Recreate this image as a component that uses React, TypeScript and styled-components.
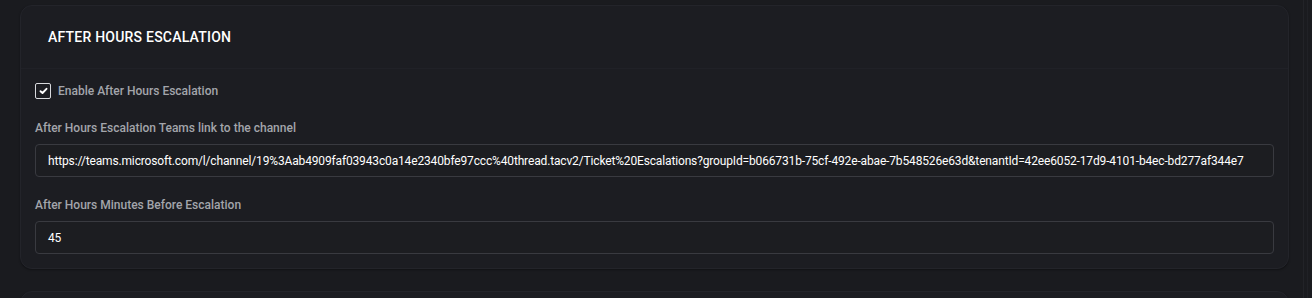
import styled, { createGlobalStyle } from 'styled-components';

const TEAMS_LINK =
  'https://teams.microsoft.com/l/channel/19%3Aab4909faf03943c0a14e2340bfe97ccc%40thread.tacv2/Ticket%20Escalations?groupId=b066731b-75cf-492e-abae-7b548526e63d&tenantId=42ee6052-17d9-4101-b4ec-bd277af344e7';

const GlobalStyle = createGlobalStyle`
  html, body {
    margin: 0;
    padding: 0;
    background-color: #1a1b1f;
    font-family: Roboto, "Liberation Sans", Arial, sans-serif;
  }
`;

const Page = styled.div`
  display: flex;
  height: 298px;
  overflow: hidden;
`;

const Content = styled.div`
  flex: 1;
  min-width: 0;
  display: flex;
  flex-direction: column;
  gap: 22px;
  padding: 5px 14px 0 20px;
`;

const Rail = styled.div`
  flex-shrink: 0;
  width: 3px;
  border-left: 1px solid #222328;
  border-right: 1px solid #202126;
  margin-right: 4px;
`;

const Card = styled.section<{ $ghost?: boolean }>`
  min-width: 0;
  background-color: #1c1d22;
  border: 1px solid #23242a;
  border-radius: 12px;
  box-shadow: 0 1px 2px rgba(0, 0, 0, 0.35);
  height: ${(props) => (props.$ghost ? '40px' : 'auto')};
  flex-shrink: 0;
`;

const CardHeader = styled.div`
  display: flex;
  align-items: center;
  height: 62px;
  padding: 0 27px;
  border-bottom: 1px solid #202127;
`;

const Title = styled.h3`
  margin: 0;
  font-size: 14px;
  font-weight: 500;
  letter-spacing: 0.22px;
  color: #ffffff;
`;

const CardBody = styled.div`
  display: flex;
  flex-direction: column;
  padding: 14px;
`;

const CheckRow = styled.label`
  display: flex;
  align-items: center;
  gap: 7px;
  margin-bottom: 22px;
  cursor: pointer;
`;

const CheckBox = styled.span`
  display: flex;
  align-items: center;
  justify-content: center;
  width: 14px;
  height: 14px;
  border: 1px solid #d8d9dd;
  border-radius: 2px;
`;

const CheckText = styled.span`
  font-size: 12px;
  font-weight: 500;
  color: #a3a5ab;
`;

const Field = styled.div<{ $gap?: string }>`
  display: flex;
  flex-direction: column;
  gap: 9px;
  margin-bottom: ${(props) => props.$gap ?? '0'};
`;

const FieldLabel = styled.label`
  font-size: 12px;
  font-weight: 500;
  color: #a3a5ab;
`;

const TextInput = styled.div`
  display: flex;
  align-items: center;
  height: 31px;
  padding: 0 12px;
  border: 1px solid #393a40;
  border-radius: 4px;
  background-color: #1c1d21;
  font-size: 12px;
  letter-spacing: -0.15px;
  color: #ffffff;
  white-space: nowrap;
  overflow: hidden;
`;

export default function App() {
  return (
    <Page>
      <GlobalStyle />
      <Content>
        <Card>
          <CardHeader>
            <Title>AFTER HOURS ESCALATION</Title>
          </CardHeader>
          <CardBody>
            <CheckRow>
              <CheckBox>
                <svg width="9" height="8" viewBox="0 0 9 8">
                  <path d="M1.5 4.2 L3.5 6 L7.5 1.8" fill="none" stroke="#ffffff" strokeWidth="1.9" strokeLinecap="round" strokeLinejoin="round" />
                </svg>
              </CheckBox>
              <CheckText>Enable After Hours Escalation</CheckText>
            </CheckRow>
            <Field $gap="21px">
              <FieldLabel>After Hours Escalation Teams link to the channel</FieldLabel>
              <TextInput>{TEAMS_LINK}</TextInput>
            </Field>
            <Field>
              <FieldLabel>After Hours Minutes Before Escalation</FieldLabel>
              <TextInput>45</TextInput>
            </Field>
          </CardBody>
        </Card>
        <Card $ghost />
      </Content>
      <Rail />
    </Page>
  );
}
